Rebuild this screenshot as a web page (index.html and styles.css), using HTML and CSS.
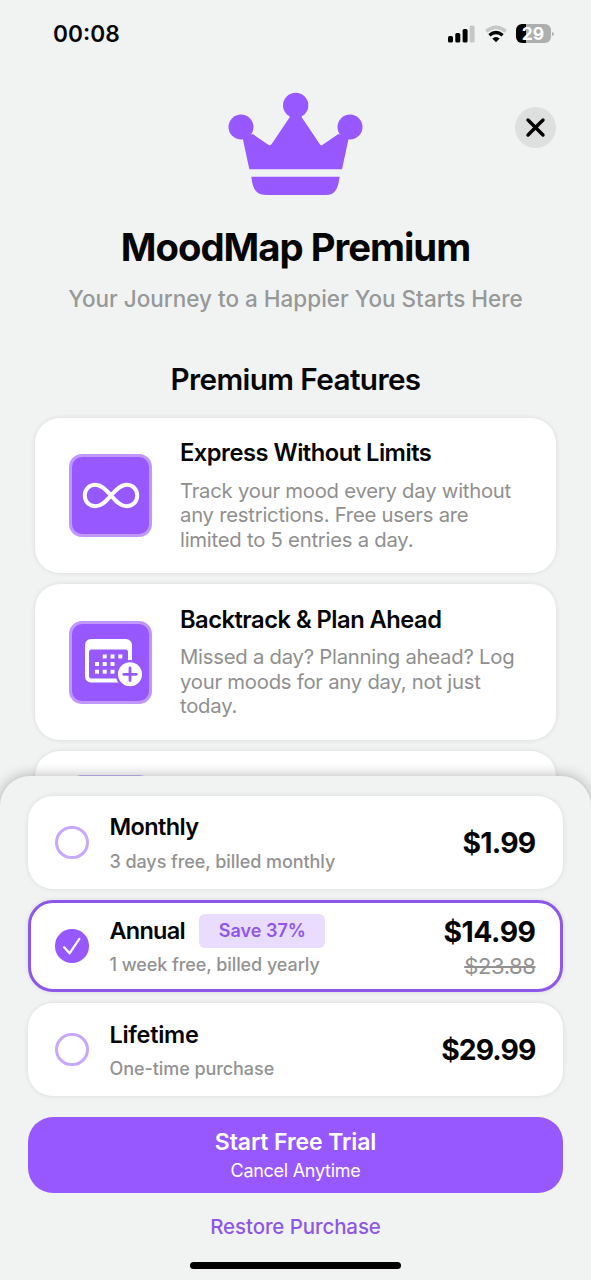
FILE: index.html
```html
<!DOCTYPE html>
<html lang="en">
<head>
<meta charset="utf-8">
<meta name="viewport" content="width=device-width, initial-scale=1">
<title>MoodMap Premium</title>
<link rel="stylesheet" href="styles.css">
</head>
<body>
<div class="screen">
  <main class="content">
    <div class="status">
      <span class="time">00:08</span>
      <div class="indicators">
        <svg class="signal" viewBox="0 0 27 18"><rect x="0" y="11" width="5" height="6.5" rx="1.6"/><rect x="7.3" y="8" width="5" height="9.500" rx="1.600"/><rect x="14.600" y="4" width="5" height="13.500" rx="1.600"/><rect class="dim" x="21.600" y="0.500" width="5" height="17" rx="1.600"/></svg>
        <svg class="wifi" viewBox="0 0 24 18"><path class="dim-line" d="M2.200 6.400Q12-1.800 21.800 6.400"/><path class="line" d="M5.400 10.200Q12 4.800 18.600 10.200"/><path d="M8.300 13.500Q12 10.300 15.700 13.500L12 17.200Z"/></svg>
        <div class="battery"><span>29</span></div>
        <svg class="battery-cap" viewBox="0 0 3 6"><path d="M0 0Q3 1 3 3T0 6Z"/></svg>
      </div>
    </div>
    <button class="close" aria-label="Close"><svg viewBox="0 0 41 41"><path d="M13 13L28 28M28 13L13 28"/></svg></button>
    <svg class="crown" viewBox="0 0 450 360"><circle cx="227" cy="61" r="38"/><circle cx="63" cy="126" r="37.500"/><circle cx="390" cy="126" r="37.500"/><path d="M67 155L88 253H366L387 155L355 147L308 179Q303 183 299 177L245 97V80H209V97L155 177Q150 183 145 179L98 147Z"/><path d="M94 275H359C354 312 345 330 318 330H138C108 330 98 312 94 275Z"/></svg>
    <h1 class="title">MoodMap Premium</h1>
    <p class="subtitle">Your Journey to a Happier You Starts Here</p>
    <h2 class="section-title">Premium Features</h2>
    <div class="features">
      <article class="feature">
        <div class="feature-icon"><svg viewBox="0 0 83 83"><path class="infinity" d="M42 41.500C36 34.500 32 30.800 26.500 30.800C20 30.800 15.800 35.500 15.800 41.500S20 52.200 26.500 52.200C32 52.200 36 48.500 42 41.500S52 30.800 57.500 30.800C64 30.800 68.200 35.500 68.200 41.500S64 52.200 57.500 52.200C52 52.200 48 48.500 42 41.500Z"/></svg></div>
        <div class="feature-text">
          <h3>Express Without Limits</h3>
          <p>Track your mood every day without<br>any restrictions. Free users are<br>limited to 5 entries a day.</p>
        </div>
      </article>
      <article class="feature">
        <div class="feature-icon"><svg viewBox="0 0 83 83"><rect class="white" x="16" y="18" width="47" height="43.500" rx="6"/><rect class="purple" x="20" y="28.500" width="39" height="29" rx="2.500"/><g class="white"><rect x="33.700" y="33.500" width="4" height="4"/><rect x="41.500" y="33.500" width="4" height="4"/><rect x="49.300" y="33.500" width="4" height="4"/><rect x="26" y="41" width="4" height="4"/><rect x="33.700" y="41" width="4" height="4"/><rect x="41.500" y="41" width="4" height="4"/><rect x="26" y="48.700" width="4" height="4"/><rect x="33.700" y="48.700" width="4" height="4"/><rect x="41.500" y="48.700" width="4" height="4"/></g><circle class="purple" cx="61" cy="53.300" r="14.300"/><circle class="white" cx="61" cy="53.300" r="12"/><path class="plus" d="M61 47V59.600M54.700 53.300H67.300"/></svg></div>
        <div class="feature-text">
          <h3>Backtrack &amp; Plan Ahead</h3>
          <p>Missed a day? Planning ahead? Log<br>your moods for any day, not just<br>today.</p>
        </div>
      </article>
      <article class="feature next"><div class="feature-icon"></div></article>
    </div>
  </main>
  <section class="sheet">
    <div class="plan">
      <span class="radio"></span>
      <div class="plan-text"><div class="plan-name"><b class="monthly">Monthly</b></div><p>3 days free, billed monthly</p></div>
      <div class="prices"><strong>$1.99</strong></div>
    </div>
    <div class="plan selected">
      <span class="radio"><svg viewBox="0 0 33 33"><path d="M9 18L14.300 24L24 9.800"/></svg></span>
      <div class="plan-text"><div class="plan-name"><b class="annual">Annual</b><span class="badge">Save 37%</span></div><p>1 week free, billed yearly</p></div>
      <div class="prices"><strong class="annual-price">$14.99</strong><s>$23.88</s></div>
    </div>
    <div class="plan">
      <span class="radio"></span>
      <div class="plan-text"><div class="plan-name"><b class="lifetime">Lifetime</b></div><p>One-time purchase</p></div>
      <div class="prices"><strong class="lifetime-price">$29.99</strong></div>
    </div>
    <button class="cta"><span class="cta-main">Start Free Trial</span><span class="cta-sub">Cancel Anytime</span></button>
    <a class="restore">Restore Purchase</a>
    <div class="home"></div>
  </section>
</div>
</body>
</html>
```
FILE: styles.css
```css
* { box-sizing: border-box; }
body { margin: 0; background: #f1f3f3; font-family: Inter, "Liberation Sans", sans-serif; color: #050505; }
h1, h2, h3, p { margin: 0; }
button { border: 0; padding: 0; font-family: inherit; }
.screen { width: 591px; height: 1280px; overflow: hidden; display: flex; flex-direction: column; }
.content { position: relative; height: 775.5px; flex: none; overflow: hidden; display: flex; flex-direction: column; align-items: center; }

.status { width: 100%; height: 67px; flex: none; padding: 0 37.5px 0 53px; display: flex; align-items: center; justify-content: space-between; }
.time { font-size: 22.7px; font-weight: 600; }
.indicators { display: flex; align-items: center; }
.signal { width: 27px; height: 18px; }
.signal .dim { fill: #c5c7c7; }
.wifi { width: 24px; height: 18px; margin-left: 9px; }
.wifi .dim-line, .wifi .line { fill: none; stroke-width: 3.4; stroke: #000; }
.wifi .dim-line { stroke: #c5c7c7; }
.battery { width: 35px; height: 19px; margin-left: 8px; border-radius: 6px; background: linear-gradient(90deg, #000 30%, #adafaf 30%); color: #fff; font-size: 17.5px; line-height: 19px; font-weight: 700; text-align: center; }
.battery-cap { width: 2px; height: 6px; margin-left: 1px; fill: #adafaf; }

.close { position: absolute; top: 107px; right: 35px; width: 41px; height: 41px; border-radius: 50%; background: #dedfdf; }
.close svg { display: block; fill: none; stroke: #000; stroke-width: 3.4; stroke-linecap: round; }
.crown { width: 150px; height: 120px; flex: none; margin: 18px 1px 0 0; fill: #9858ff; }
.title { margin-top: 18px; font-size: 38.3px; line-height: 48px; font-weight: 700; letter-spacing: -1px; }
.subtitle { margin-top: 12.5px; font-size: 22.5px; line-height: 30px; font-weight: 500; color: #979898; }
.section-title { margin-top: 47.5px; font-size: 29.7px; line-height: 36px; font-weight: 600; letter-spacing: -.6px; }

.features { width: 521px; margin-top: 20.5px; display: flex; flex-direction: column; gap: 11px; }
.feature { height: 155.5px; flex: none; padding-left: 34px; display: flex; align-items: center; gap: 28px; background: #fff; border-radius: 25px; box-shadow: 0 0 5px rgba(0, 0, 0, .1); }
.feature-icon { width: 83px; height: 83px; flex: none; margin-top: 1px; border: 3px solid #c197ff; border-radius: 13px; background: #9858ff; }
.feature-icon svg { display: block; width: 83px; height: 83px; margin: -3px; fill: none; }
.next { align-items: flex-start; padding-top: 23px; }
.next .feature-icon { border-color: #c7b5fa; }
.infinity { stroke: #fff; stroke-width: 4; }
.white { fill: #fff; }
.purple { fill: #9858ff; }
.plus { stroke: #9858ff; stroke-width: 2.8; stroke-linecap: round; }
.feature-text { padding-top: 1px; display: flex; flex-direction: column; gap: 11.500px; white-space: nowrap; }
.feature-text h3 { font-size: 23.7px; line-height: 28px; font-weight: 600; letter-spacing: -.5px; }
.feature-text p { font-size: 20.3px; line-height: 24.5px; letter-spacing: -.24px; color: #8f8f8f; }

.sheet { position: relative; flex: 1; padding: 20.5px 28px 0; display: flex; flex-direction: column; align-items: center; background: #f1f3f3; border-radius: 30px 30px 0 0; box-shadow: 0 0 14px rgba(0, 0, 0, .3); }
.plan { width: 535px; height: 92.5px; flex: none; margin-bottom: 11.2px; padding: 0 27.5px 0 27px; display: flex; align-items: center; background: #fff; border-radius: 25px; box-shadow: 0 0 5px rgba(0, 0, 0, .1); }
.selected { border: 3px solid #8e57ec; padding: 0 24.5px 0 24px; }
.radio { width: 33.5px; height: 33.5px; flex: none; border: 3px solid #c7a8fb; border-radius: 50%; }
.selected .radio { border: 0; background: #9858ff; }
.radio svg { display: block; fill: none; stroke: #fff; stroke-width: 2.2; stroke-linecap: round; stroke-linejoin: round; }
.plan-text { margin-left: 21px; padding-top: 1.5px; flex: 1; display: flex; flex-direction: column; gap: 9.5px; white-space: nowrap; }
.plan-name { height: 28px; display: flex; align-items: center; gap: 14.5px; font-size: 23.5px; line-height: 28px; }
.plan-name b { font-weight: 600; }
.monthly { letter-spacing: -.6px; }
.annual { letter-spacing: -.75px; }
.lifetime { letter-spacing: -.3px; }
.badge { width: 126px; height: 34.5px; border-radius: 6px; background: #eadcff; color: #8e57e8; font-size: 18px; line-height: 34.5px; font-weight: 600; text-align: center; }
.plan-text p { font-size: 18px; line-height: 22px; letter-spacing: -.07px; font-weight: 500; color: #929292; }
.prices { padding-top: 1px; display: flex; flex-direction: column; align-items: flex-end; gap: 5.5px; }
.prices strong { font-size: 28.3px; line-height: 34px; font-weight: 700; letter-spacing: -.7px; }
.prices .annual-price { letter-spacing: -.45px; }
.prices .lifetime-price { letter-spacing: -.9px; }
.prices s { font-size: 22px; line-height: 24px; letter-spacing: -.4px; color: #929292; text-decoration-thickness: 1.5px; }
.cta { width: 535.5px; height: 76px; flex: none; margin-top: 9.6px; border-radius: 25px; background: #9858ff; color: #fff; display: flex; flex-direction: column; align-items: center; justify-content: center; gap: 4px; }
.cta-main { font-size: 23px; line-height: 28px; font-weight: 600; letter-spacing: -.1px; }
.cta-sub { font-size: 18px; line-height: 22px; letter-spacing: -.28px; }
.restore { margin-top: 20px; font-size: 20.5px; line-height: 28px; font-weight: 500; letter-spacing: -.1px; color: #8e57e8; }
.home { width: 211px; height: 7px; margin-top: 21px; border-radius: 4px; background: #000; }
```
